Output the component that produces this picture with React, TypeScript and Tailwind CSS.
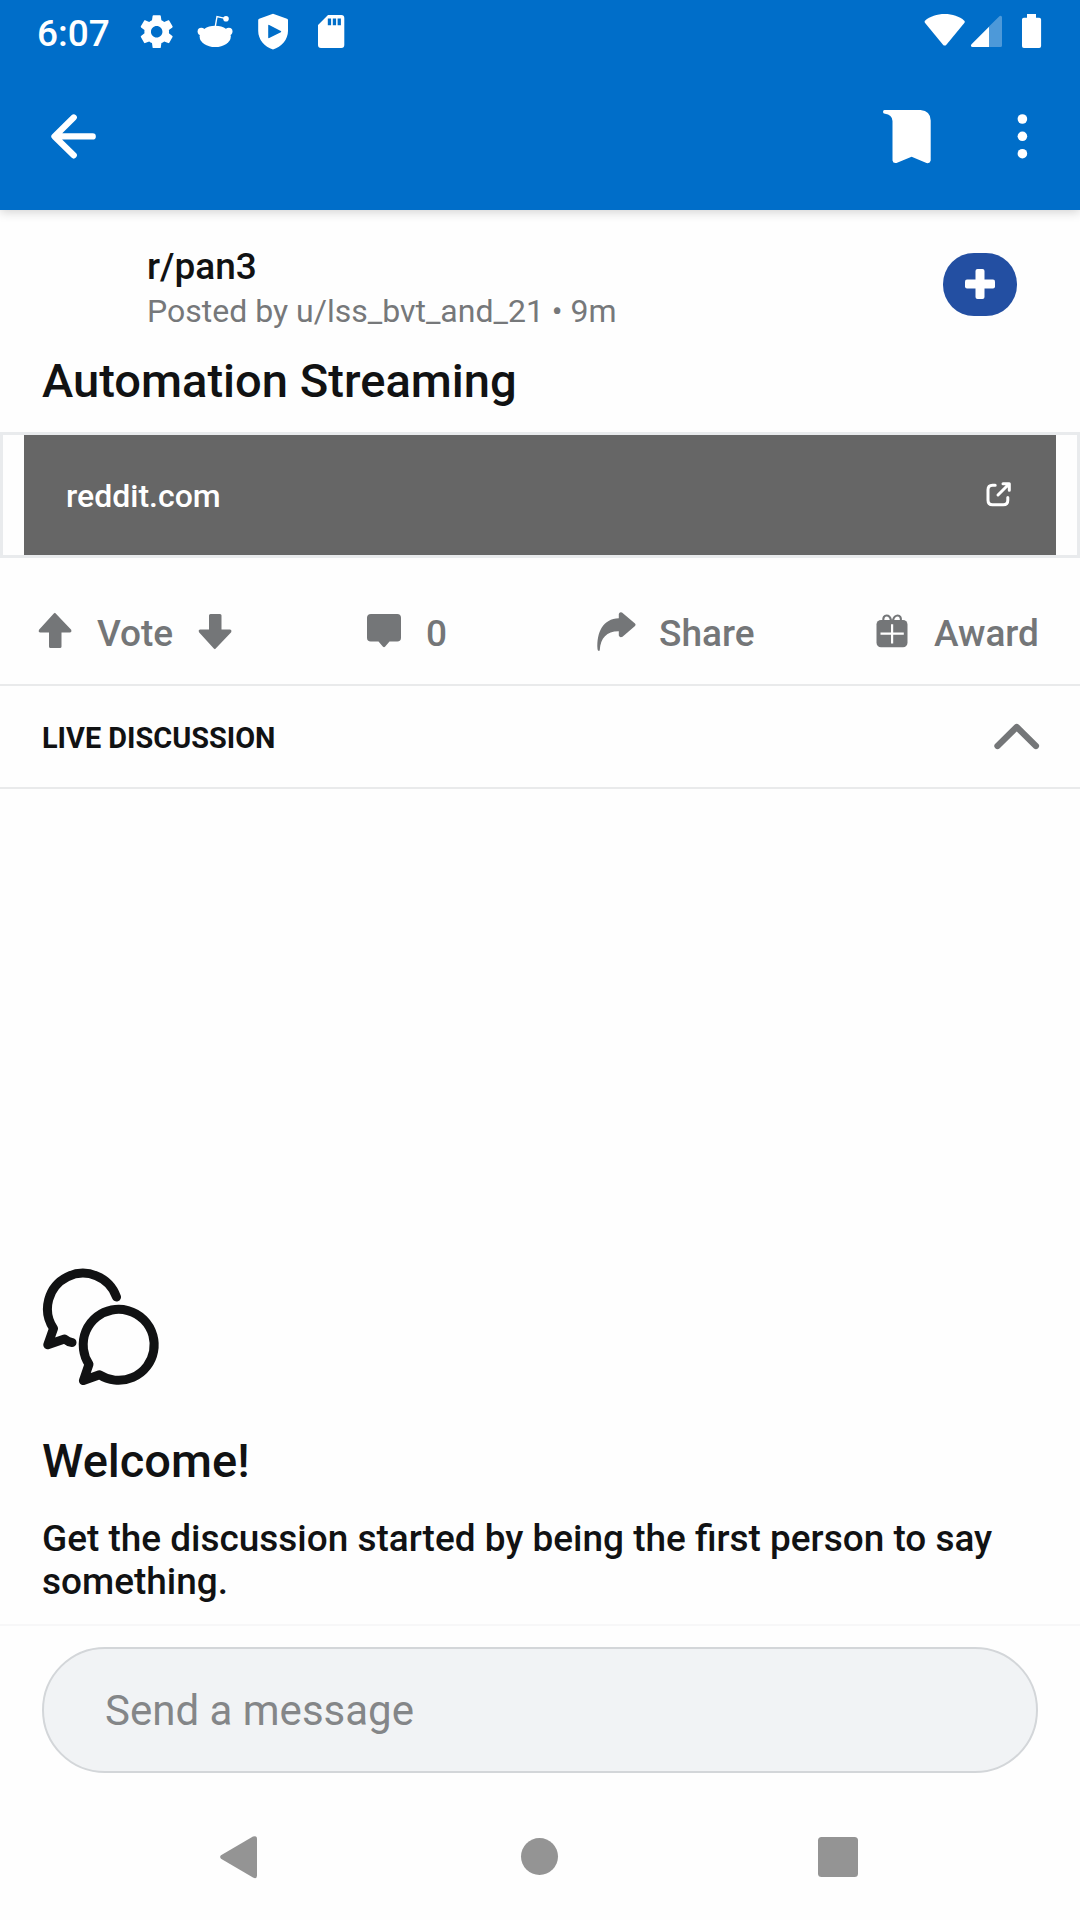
import type { ReactNode } from "react";

type IconProps = { box: string; w: number; h: number; className?: string; children: ReactNode };

function Icon({ box, w, h, className = "", children }: IconProps) {
  return (
    <svg viewBox={box} width={w} height={h} fill="currentColor" className={"block shrink-0 " + className}>
      {children}
    </svg>
  );
}

function StatusBar() {
  return (
    <div className="flex h-[63px] items-start text-white">
      <span className="ml-[37px] mt-[12px] w-[104px] text-[37px] leading-[43px] font-medium">6:07</span>
      <Icon box="0 0 24 24" w={39.4} h={39.4} className="-ml-[3.7px] mt-[12px]">
        <path d="M19.43 12.98c.04-.32.07-.64.07-.98s-.03-.66-.07-.98l2.11-1.65c.19-.15.24-.42.12-.64l-2-3.46c-.12-.22-.39-.3-.61-.22l-2.49 1c-.52-.4-1.08-.73-1.69-.98l-.38-2.65C14.46 2.18 14.25 2 14 2h-4c-.25 0-.46.18-.49.42l-.38 2.65c-.61.25-1.17.59-1.69.98l-2.49-1c-.23-.09-.49 0-.61.22l-2 3.46c-.13.22-.07.49.12.64l2.11 1.65c-.04.32-.07.65-.07.98s.03.66.07.98l-2.11 1.65c-.19.15-.24.42-.12.64l2 3.46c.12.22.39.3.61.22l2.49-1c.52.4 1.08.73 1.69.98l.38 2.65c.03.24.24.42.49.42h4c.25 0 .46-.18.49-.42l.38-2.65c.61-.25 1.17-.59 1.69-.98l2.49 1c.23.09.49 0 .61-.22l2-3.46c.12-.22.07-.49-.12-.64l-2.11-1.65zM12 15.5c-1.93 0-3.5-1.57-3.5-3.5s1.57-3.5 3.5-3.5 3.5 1.57 3.5 3.5-1.57 3.5-3.5 3.5z" />
      </Icon>
      <Icon box="196 0 40 63" w={40} h={63} className="ml-[19.3px]">
        <ellipse cx="215.2" cy="36.4" rx="15.6" ry="10.6" />
        <circle cx="201.3" cy="31.4" r="3.7" />
        <circle cx="228.8" cy="31.4" r="3.7" />
        <path d="M215.2 27 217 16.6l8 1.8" fill="none" stroke="currentColor" strokeWidth="1.4" />
        <circle cx="226" cy="18.7" r="2.8" />
      </Icon>
      <Icon box="256 0 34 63" w={34} h={63} className="ml-[20px]">
        <path
          fillRule="evenodd"
          d="M273 13.800 287 18.800Q288 19.200 288 20.200V31c0 8.500-6.500 15.800-15 18.600-8.500-2.800-14.800-10.100-14.800-18.600V20.200Q258.200 19.200 259.200 18.800zM268.200 25.500V37.500Q268.200 38.600 269.200 38.100L280.800 32.200Q281.800 31.500 280.800 30.900L269.200 24.900Q268.200 24.500 268.200 25.500z"
        />
      </Icon>
      <Icon box="316 0 30 63" w={30} h={63} className="ml-[26px]">
        <path
          fillRule="evenodd"
          d="M328 15h13.300a3 3 0 0 1 3 3v27a3 3 0 0 1-3 3H321a3 3 0 0 1-3-3V25zM327.800 18.600v6.700h3.300v-6.700zM332.800 18.600v6.700h3.300v-6.700zM337.600 18.600v6.700h3.300v-6.700z"
        />
      </Icon>
      <Icon box="920 0 130 63" w={130} h={63} className="ml-auto mr-[30px]">
        <path d="M925 20.700C930 16.500 937 14.100 944.700 14.100S959.400 16.500 964.300 20.700Q965.300 21.700 964.500 22.800L946.400 44.700Q944.700 46.400 943 44.700L924.900 22.800Q924.100 21.700 925 20.700Z" />
        <path opacity=".3" d="M989 26.500 999.400 16.300Q1000.200 15.600 1001.200 16 1002 16.300 1002 17.500V45.500Q1002 47 1000.500 47H989Z" />
        <path d="M989 26.700V47h-16.500c-1.600 0-2.100-1.600-1-2.700z" />
        <path d="M1027 14h9v3.700h3.200q1.900 0 1.900 1.900v26.500q0 1.900-1.900 1.900h-15.300q-1.900 0-1.900-1.900V19.600q0-1.900 1.900-1.900H1027z" />
      </Icon>
    </div>
  );
}

function Toolbar() {
  return (
    <div className="flex h-[147px] items-center pl-[48px] text-white">
      <Icon box="48 112 50 49" w={50} h={49}>
        <path
          d="M73.700 117.500 54.500 136.400 73.700 155.300M55 136.400H92.700"
          fill="none"
          stroke="currentColor"
          strokeWidth="6.300"
          strokeLinecap="round"
          strokeLinejoin="round"
        />
      </Icon>
      <Icon box="880 106 54 61" w={54} h={61} className="ml-auto">
        <path d="M884.500 110H920.500Q930.700 111 930.700 120.500V160.500Q930 163.800 926.500 163L911.600 156.700 896.500 163Q893 163.600 892.500 160.500V121Q892 114.500 885 113.800 883 113.500 883 112 883 110.200 884.500 110Z" />
      </Icon>
      <Icon box="1014 112 16 49" w={16} h={49} className="ml-[80px] mr-[50px]">
        <circle cx="1022.400" cy="119" r="4.800" />
        <circle cx="1022.400" cy="136.300" r="4.800" />
        <circle cx="1022.400" cy="153.700" r="4.800" />
      </Icon>
    </div>
  );
}

function PostHeader() {
  return (
    <section className="h-[222px]">
      <div className="flex h-[141px] pl-[147px] pr-[63px] pt-[35px]">
        <div className="flex-1">
          <p className="text-[37px] leading-[44px] font-medium text-[#111213]">r/pan3</p>
          <p className="mt-[1px] text-[32px] leading-[42px] text-[#76787a]">Posted by u/lss_bvt_and_21 • 9m</p>
        </div>
        <button className="mt-[8px] flex h-[63px] w-[74px] items-center justify-center rounded-[31px] bg-[#234fa2] text-white">
          <Icon box="0 0 30 30" w={30} h={30} className="-mt-[1px]">
            <rect x="0" y="10.500" width="30" height="9" rx="2" />
            <rect x="10.500" y="0" width="9" height="30" rx="2" />
          </Icon>
        </button>
      </div>
      <h1 className="pl-[42px] text-[47.1px] leading-[60px] font-medium text-[#111213]">Automation Streaming</h1>
    </section>
  );
}

function LinkCard() {
  return (
    <div className="h-[126px] border-[3px] border-[#e9ebed] px-[21px]">
      <div className="flex h-[120px] items-center justify-between bg-[#666] pl-[42px] pr-[43px] text-white">
        <span className="pt-[2px] text-[32px] leading-[37px] font-medium">reddit.com</span>
        <Icon box="984 480 29 28" w={29} h={28} className="-mt-[2px]">
          <g fill="none" stroke="currentColor" strokeWidth="3" strokeLinecap="round" strokeLinejoin="round">
            <path d="M995.200 485.200H992.500Q988 485.200 988 489.700V500.300Q988 504.800 992.500 504.800H1003.300Q1007.800 504.800 1007.800 500.300V497.500" />
            <path d="M1003 483.700H1009.300V490.200M1009 484 998 495" />
          </g>
        </Icon>
      </div>
    </div>
  );
}

function Actions() {
  return (
    <div className="flex h-[128px] items-start border-b-2 border-[#e9eaeb] pl-[36px] pt-[46px] text-[37px] leading-[60px] font-medium text-[#747678]">
      <Icon box="36 604 38 58" w={38} h={58}>
        <path d="M55 612.800 71.200 629.800Q72 632.500 69.800 632.500H61.500V646.500Q61.500 648 60 648H50.500Q49 648 49 646.500V632.500H40.300Q38 632.500 39 629.800L53.800 613.600Q55 612.600 55 612.800Z" />
      </Icon>
      <span className="ml-[23px] w-[99px]">Vote</span>
      <Icon box="196 604 38 58" w={38} h={58}>
        <path d="M215 649.200 231.200 632.200Q232 629.500 229.800 629.500H221.500V615.500Q221.500 614 220 614H210.500Q209 614 209 615.500V629.500H200.300Q198 629.500 199 632.200L213.800 648.400Q215 649.400 215 649.200Z" />
      </Icon>
      <Icon box="364 604 40 58" w={40} h={58} className="ml-[130px]">
        <path d="M371 614H397.200Q401 614 401 617.800V637.700Q401 641.500 397.200 641.500H389.500L385 646.800Q384 647.600 383 646.800L378.500 641.500H370.800Q367 641.500 367 637.700V617.800Q367 614 371 614Z" />
      </Icon>
      <span className="ml-[22px] w-[168px]">0</span>
      <Icon box="594 604 46 58" w={46} h={58}>
        <path d="M618.800 618.200V614Q619.500 611.500 622 612.500L635 623.500Q636.300 624.700 635 625.900L622.500 636.700Q619.800 638 618.800 635.500V631.200C607 631 600.500 638 599.800 649.700Q599.600 651.200 598.500 650.800 597.600 650.800 597.500 649C596.500 632 603 618.800 618.800 618.200Z" />
      </Icon>
      <span className="ml-[19px] w-[215px]">Share</span>
      <Icon box="874 604 36 58" w={36} h={58}>
        <rect x="876.500" y="620" width="31" height="27.300" rx="4.500" />
        <path d="M880.500 633.700H903.800M892.100 624.300V643.500" stroke="white" strokeWidth="2.200" />
        <path
          d="M891 620.500C890.500 617.500 888.500 615.500 886.500 615.500S882.800 617.500 883.300 621M893 620.500C893.500 617.500 895.700 615.500 897.700 615.500S901.400 617.500 900.900 621"
          fill="none"
          stroke="currentColor"
          strokeWidth="2.200"
        />
      </Icon>
      <span className="ml-[24px]">Award</span>
    </div>
  );
}

function LiveHeader() {
  return (
    <div className="flex h-[103px] items-center justify-between border-b-2 border-[#e9eaeb] pl-[42px] pr-[38px]">
      <h2 className="pt-[2px] text-[28.875px] leading-[34px] font-bold text-[#111213]">LIVE DISCUSSION</h2>
      <Icon box="992 720 50 34" w={50} h={34} className="text-[#747678]">
        <path
          d="M997.500 746 1016.700 727 1035.900 746"
          fill="none"
          stroke="currentColor"
          strokeWidth="6.300"
          strokeLinecap="round"
          strokeLinejoin="round"
        />
      </Icon>
    </div>
  );
}

function Welcome() {
  return (
    <main className="flex h-[837px] flex-col justify-end border-b-2 border-[#f7f7f8] px-[42px] text-[#111213]">
      <Icon box="42 1266 120 120" w={120} h={120}>
        <g fill="none" stroke="currentColor" strokeWidth="9" strokeLinecap="round" strokeLinejoin="round">
          <path d="M116.500 1296A35.500 35.500 0 1 0 53.500 1327.500L47.800 1343.800 64.500 1338Q68.500 1341.200 72 1341.500" />
          <path d="M89 1363.300A35.500 35.500 0 1 1 99.500 1373.700L83.400 1379.600Z" />
        </g>
      </Icon>
      <h2 className="mt-[43px] text-[47px] leading-[62px] font-medium">Welcome!</h2>
      <p className="mt-[25px] mb-[21px] text-[36.95px] leading-[43px] font-medium">
        Get the discussion started by being the first person to say something.
      </p>
    </main>
  );
}

function NavBar() {
  return (
    <nav className="flex h-[126px] items-center pl-[218px] text-[#949494]">
      <Icon box="218 1834 42 46" w={42} h={46}>
        <path d="M221 1855.300 253 1836.600Q257 1835 257 1839V1875.500Q257 1879.500 253 1877.500L221 1858.700Q219.300 1857 221 1855.300Z" />
      </Icon>
      <span className="-mt-[1px] ml-[261px] h-[37px] w-[37px] rounded-full bg-[#949494]" />
      <span className="ml-[260px] h-[40px] w-[40px] rounded-[3.500px] bg-[#949494]" />
    </nav>
  );
}

export default function App() {
  return (
    <div className="flex h-[1920px] w-[1080px] flex-col overflow-hidden bg-[#fefefe] font-['Roboto',sans-serif]">
      <header className="relative bg-[#006ec9] shadow-[0_2px_10px_rgba(0,0,0,0.18)]">
        <StatusBar />
        <Toolbar />
      </header>
      <PostHeader />
      <LinkCard />
      <Actions />
      <LiveHeader />
      <Welcome />
      <div className="h-[168px] px-[42px] pt-[21px]">
        <input
          className="block h-[126px] w-full rounded-[63px] border-2 border-[#d3d6d9] bg-[#f1f3f5] px-[61px] text-[42px] leading-[49px] placeholder:text-[#848688] placeholder:opacity-100"
          placeholder="Send a message"
        />
      </div>
      <NavBar />
    </div>
  );
}
